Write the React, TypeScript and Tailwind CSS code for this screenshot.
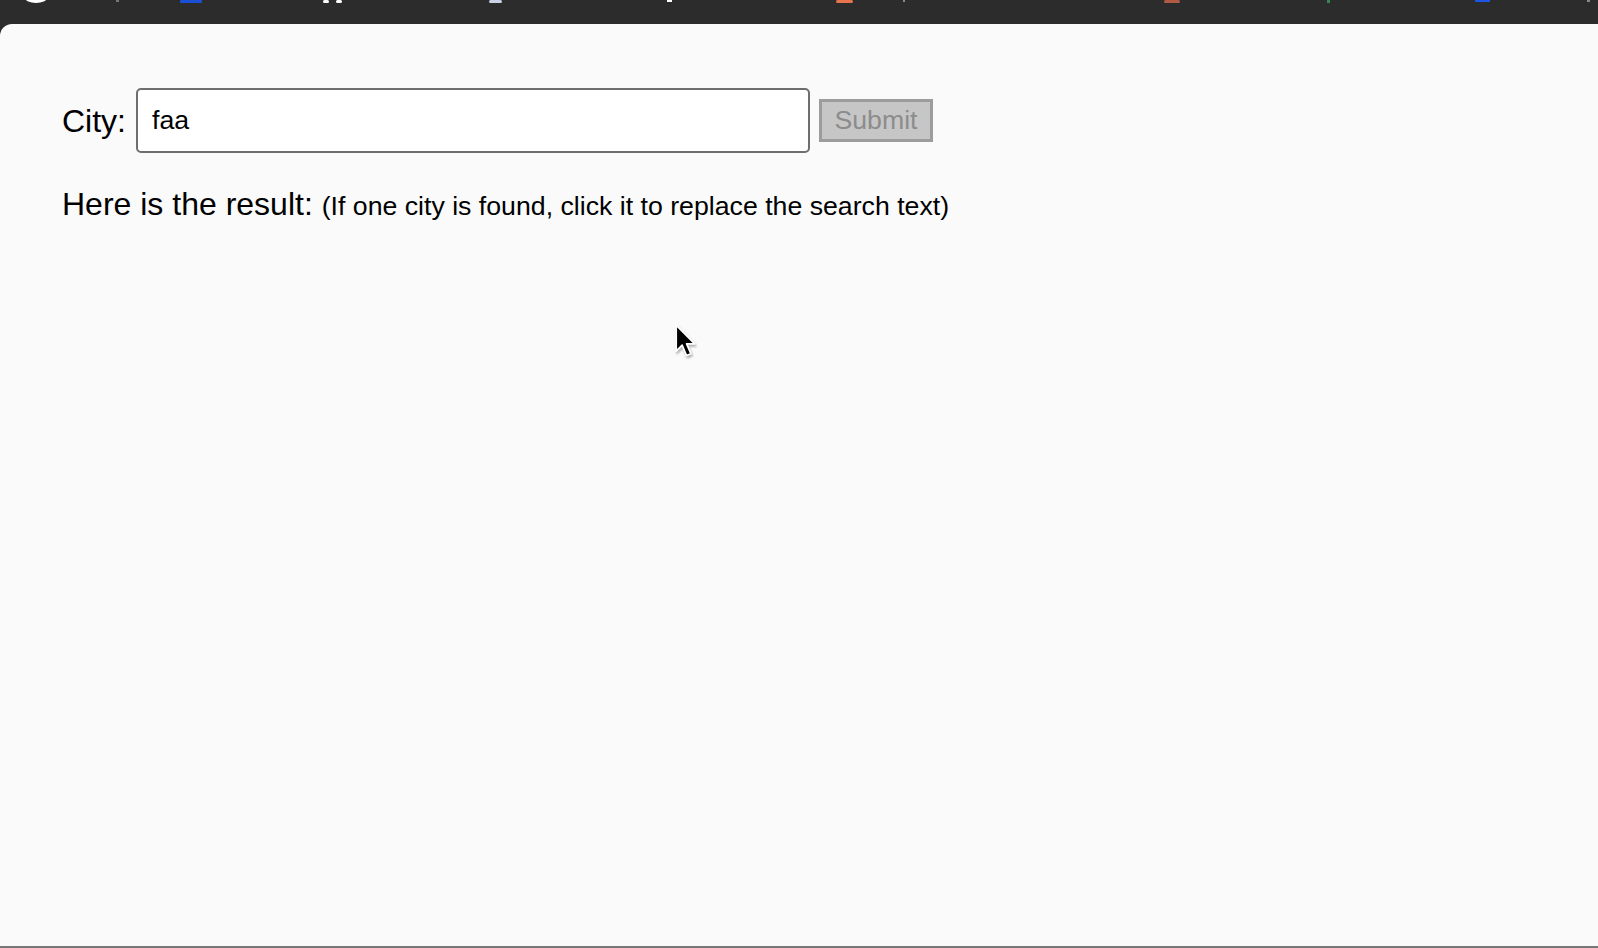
import { useState } from "react";

function Cursor() {
  return (
    <svg
      width="24"
      height="37"
      viewBox="0 0 22 34"
      className="absolute left-[674px] top-[300px] drop-shadow-[1px_2px_1px_rgba(0,0,0,0.3)]"
    >
      <path
        d="M2 1 L2 25 L7.5 19.5 L11.5 29 L15.5 27.3 L11.6 18.2 L19 18.2 Z"
        fill="#000"
        stroke="#fff"
        strokeWidth="1.6"
        strokeLinejoin="round"
      />
    </svg>
  );
}

// bottom edges of the toolbar icons, cut off by the screenshot
function TopBar() {
  return (
    <div className="h-6 shrink-0 bg-[#2c2c2c]">
      <svg width="1598" height="24" viewBox="0 0 1598 24" className="block">
        <ellipse cx="36" cy="-2" rx="11" ry="5" fill="#fff" />
        <rect x="116" y="0" width="3" height="2" fill="#777" />
        <rect x="180" y="0" width="22" height="3" rx="1" fill="#1a4fd6" />
        <rect x="323" y="0" width="6" height="3" rx="1.5" fill="#fff" />
        <rect x="336" y="0" width="6" height="3" rx="1.5" fill="#fff" />
        <rect x="489" y="0" width="13" height="3" rx="1.5" fill="#c9d3e6" />
        <rect x="667" y="0" width="5" height="2" fill="#fff" />
        <rect x="836" y="0" width="17" height="3" rx="1.5" fill="#e8734f" />
        <rect x="903" y="0" width="2" height="2" fill="#888" />
        <rect x="1164" y="0" width="16" height="3" rx="1.5" fill="#b05a45" />
        <rect x="1327" y="0" width="3" height="3" fill="#2f8a55" />
        <rect x="1475" y="0" width="15" height="2" fill="#1f55e6" />
        <rect x="1587" y="0" width="3" height="2" fill="#888" />
      </svg>
    </div>
  );
}

export default function App() {
  const [city, setCity] = useState("faa");

  return (
    <div className="flex h-[948px] flex-col overflow-hidden bg-[#2c2c2c] font-['Liberation_Sans',Arial,sans-serif] text-black">
      <TopBar />
      <div className="relative flex-1 rounded-tl-[12px] border-b-2 border-[#777] bg-[#fafafa] pl-[62px] pt-[64px]">
        <div className="flex items-center">
          <label className="mr-[10px] text-[32px] leading-[36px]">City:</label>
          <input
            value={city}
            onChange={(e) => setCity(e.target.value)}
            className="h-[65px] w-[674px] rounded-[5px] border-2 border-[#6e6e6e] bg-white pl-[14px] text-[26.7px] outline-none"
          />
          <button
            disabled
            className="ml-[9px] h-[43px] w-[114px] border-[3px] border-[#9c9c9c] bg-[#c6c6c6] text-[26.7px] leading-none text-[#8c8c8c]"
          >
            Submit
          </button>
        </div>
        <p className="mt-[33px] text-[32px] leading-[36px]">
          Here is the result:{" "}
          <span className="text-[26.7px]">
            (If one city is found, click it to replace the search text)
          </span>
        </p>
        <Cursor />
      </div>
    </div>
  );
}
